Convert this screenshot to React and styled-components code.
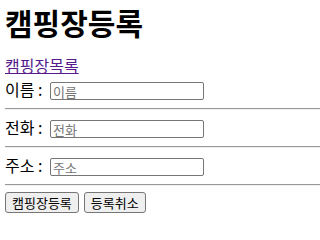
import React from "react";
import styled, { createGlobalStyle } from "styled-components";

const Global = createGlobalStyle`
  html, body { margin: 0; padding: 0; background: #fff; }
  body {
    font-family: "Noto Sans CJK KR", "Noto Sans", sans-serif;
    color: #000;
  }
`;

const Page = styled.div`
  padding: 0 0 0 5px;
`;

const Title = styled.h1`
  margin: 0;
  font-size: 30px;
  line-height: 44px;
  font-weight: 700;
`;

const Nav = styled.nav`
  margin-top: 12px;
  height: 18px;
  font-size: 16px;
  line-height: 18px;
`;

const ListLink = styled.a`
  color: #551a8b;
  text-decoration: underline;
`;

const Form = styled.form`
  display: flex;
  flex-direction: column;
  margin-top: 5px;
`;

const Field = styled.div`
  display: flex;
  align-items: flex-end;
  height: 21px;
  font-size: 16px;
`;

const Label = styled.label`
  line-height: 21px;
  margin-right: 4px;
  white-space: pre;
`;

const Input = styled.input`
  box-sizing: border-box;
  width: 154px;
  height: 18px;
  padding: 0 2px;
  border: 1px solid #767676;
  border-radius: 2px;
  font-family: "Noto Sans CJK KR", sans-serif;
  font-size: 13px;
  &::placeholder { color: #757575; }
`;

const Divider = styled.hr`
  margin: 8px 0 7px 0;
  border: none;
  border-top: 1px solid #9a9a9a;
  border-bottom: 1px solid #eeeeee;
  width: 100%;
`;

const Buttons = styled.div`
  display: flex;
  gap: 5px;
  margin-top: -1px;
`;

const Button = styled.button`
  box-sizing: border-box;
  height: 21px;
  padding: 0 6px;
  background: #efefef;
  border: 1px solid #767676;
  border-radius: 3px;
  font-family: "Noto Sans CJK KR", sans-serif;
  font-size: 13px;
  line-height: 19px;
  color: #000;
`;

const fields = [
  { label: "이름 : ", ph: "이름" },
  { label: "전화 : ", ph: "전화" },
  { label: "주소 : ", ph: "주소" },
];

export default function App() {
  return (
    <>
      <Global />
      <Page>
        <Title>캠핑장등록</Title>
        <Nav>
          <ListLink href="#">캠핑장목록</ListLink>
        </Nav>
        <Form onSubmit={(e) => e.preventDefault()}>
          {fields.map((f) => (
            <React.Fragment key={f.ph}>
              <Field>
                <Label>{f.label}</Label>
                <Input placeholder={f.ph} />
              </Field>
              <Divider />
            </React.Fragment>
          ))}
          <Buttons>
            <Button type="submit">캠핑장등록</Button>
            <Button type="reset">등록취소</Button>
          </Buttons>
        </Form>
      </Page>
    </>
  );
}
